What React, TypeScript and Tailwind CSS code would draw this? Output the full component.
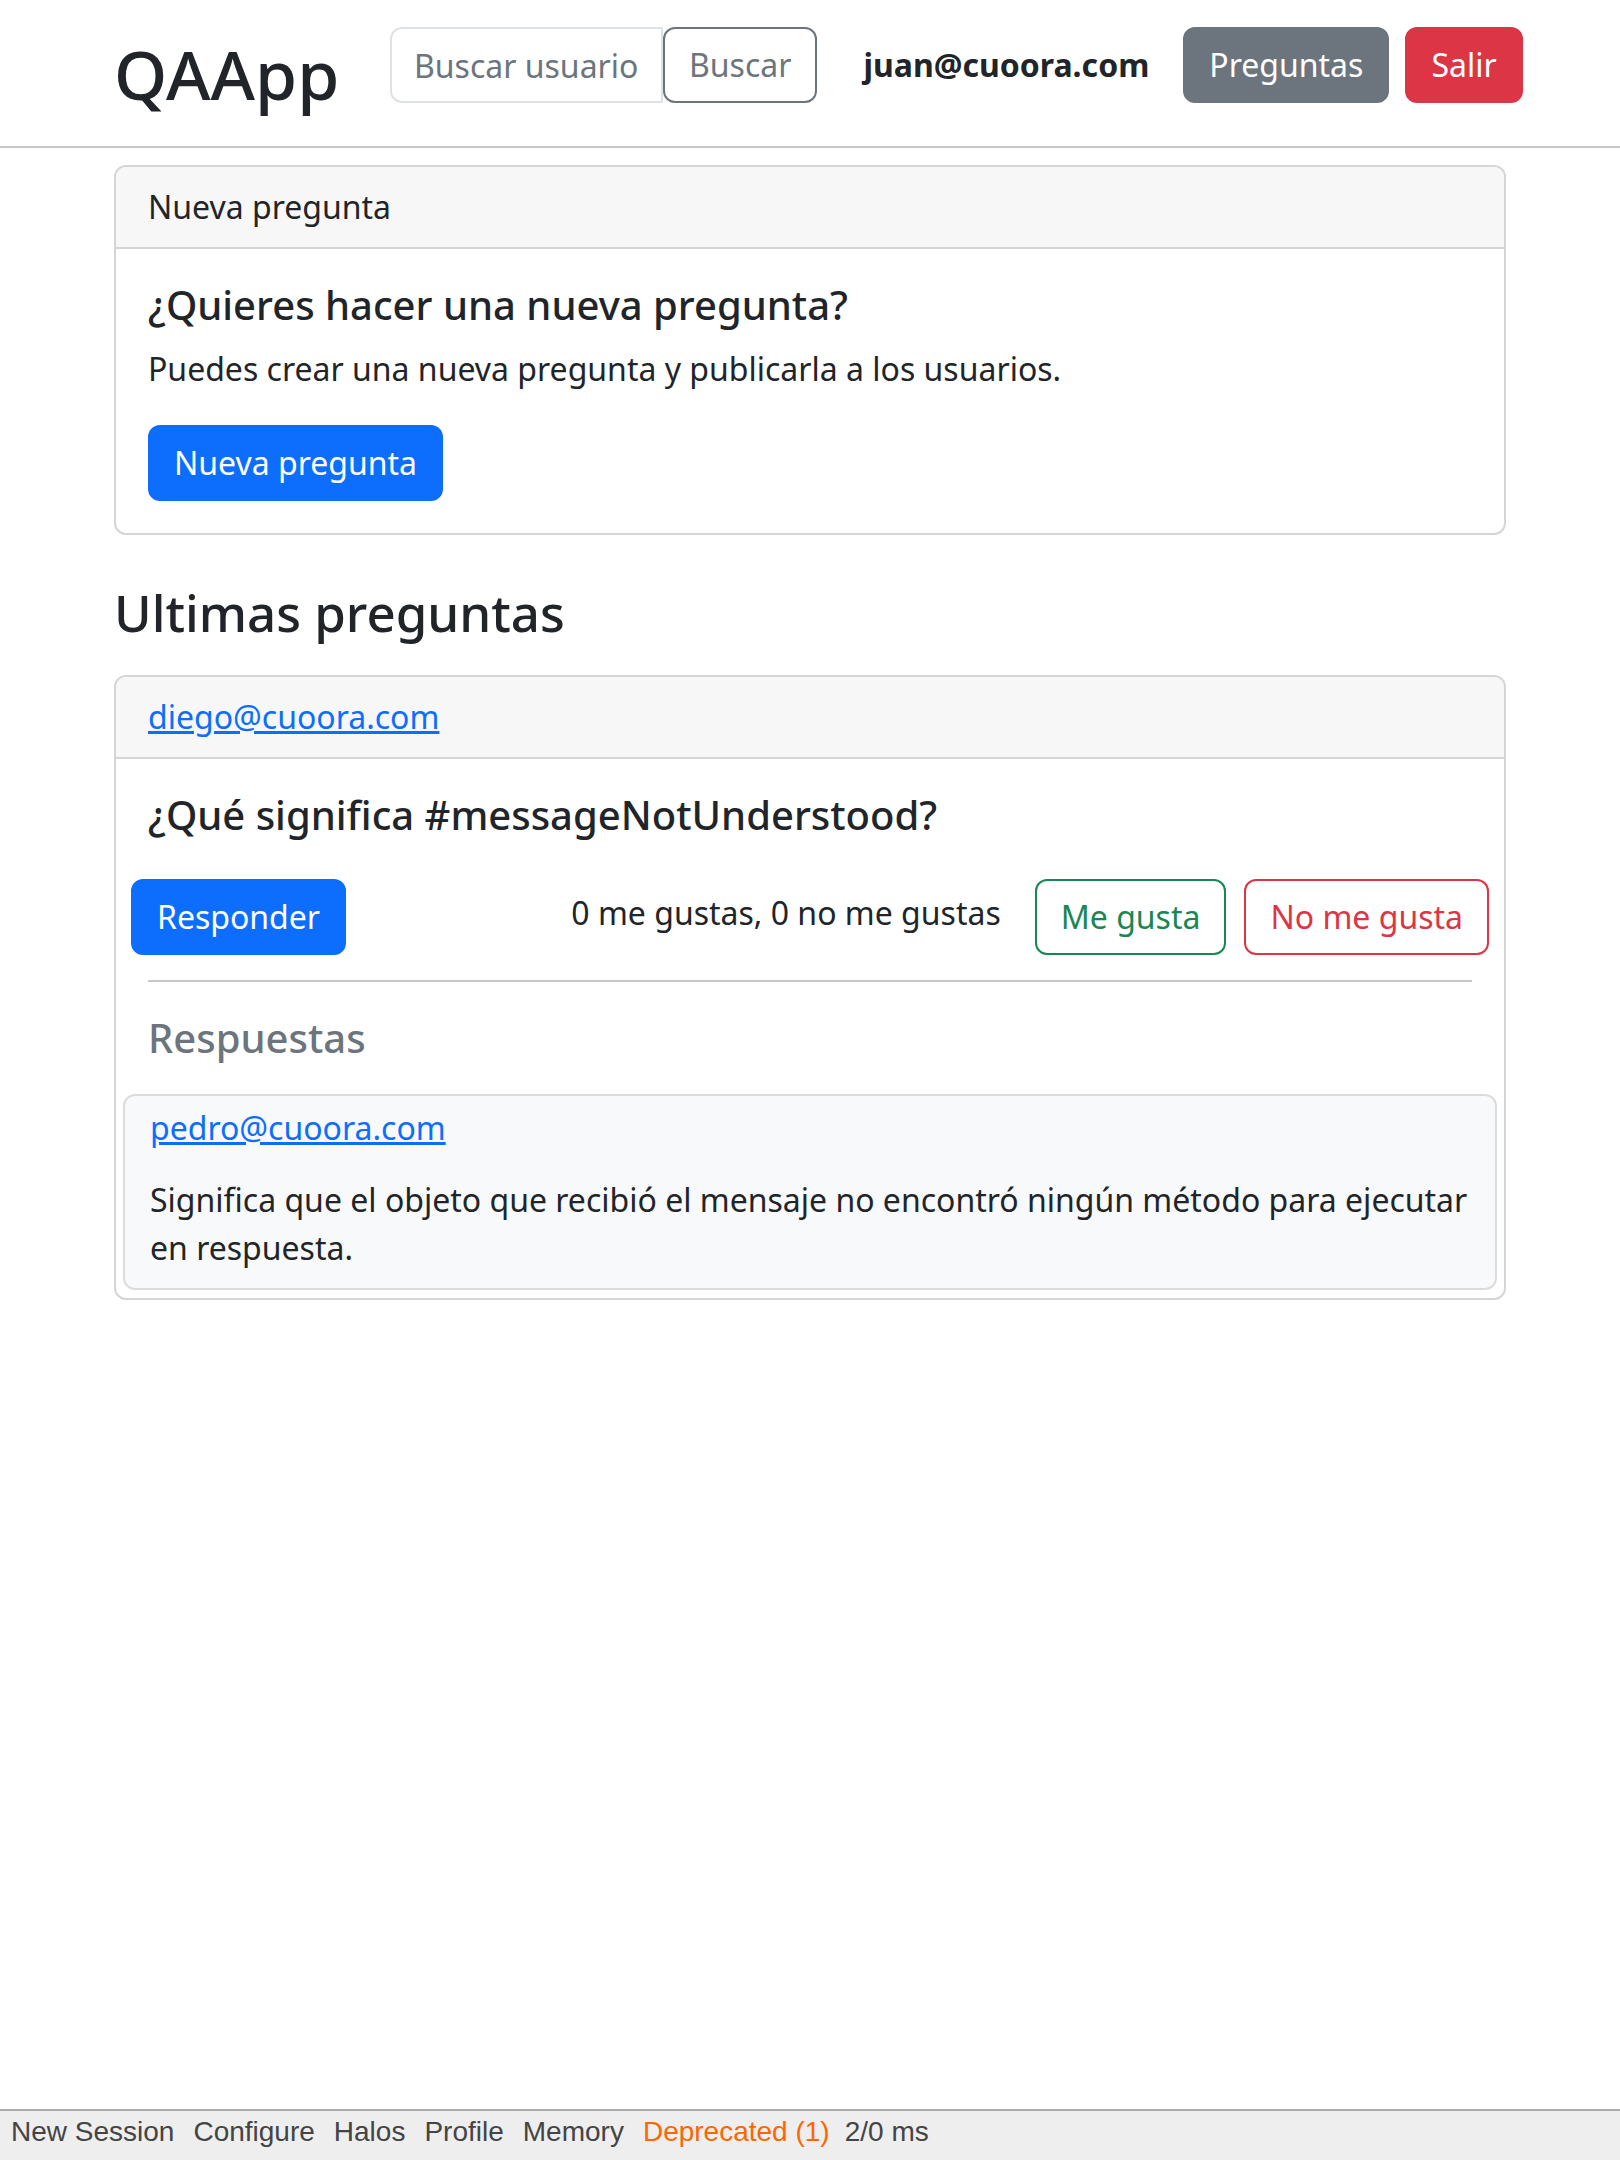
export default function App() {
  return (
    <div className="min-h-[2160px] flex flex-col bg-white text-[#212529] font-['Noto_Sans',sans-serif] text-[32px] leading-[48px]">
      {/* barra superior */}
      <header className="h-[148px] border-b-2 border-[#c8c8c8]">
        <div className="w-[1440px] mx-auto px-[24px] pt-[27px] flex items-start">
          <h1 className="w-[276px] shrink-0 mt-[6px] text-[68px] leading-[82px] font-medium">QAApp</h1>
          <div className="flex shrink-0">
            <input
              type="text"
              placeholder="Buscar usuario"
              className="w-[273px] h-[76px] pl-[22px] pr-[8px] border-2 border-[#dee2e6] rounded-l-[12px] bg-white text-[32px] outline-none placeholder:text-[#6c757d]"
            />
            <button className="h-[76px] px-[24px] py-[12px] leading-[48px] border-2 border-[#6c757d] text-[#6c757d] rounded-[12px]">
              Buscar
            </button>
          </div>
          <span className="ml-[46px] mt-[14px] shrink-0 font-bold whitespace-nowrap">juan@cuoora.com</span>
          <button className="ml-[34px] shrink-0 h-[76px] px-[24px] py-[12px] leading-[48px] border-2 border-[#6c757d] bg-[#6c757d] text-white rounded-[12px]">
            Preguntas
          </button>
          <button className="ml-[16px] shrink-0 h-[76px] px-[24px] py-[12px] leading-[48px] border-2 border-[#dc3545] bg-[#dc3545] text-white rounded-[12px]">
            Salir
          </button>
        </div>
      </header>

      <main className="w-[1440px] mx-auto px-[24px]">
        {/* nueva pregunta */}
        <div className="mt-[17px] border-2 border-[#d5d5d5] rounded-[12px] overflow-hidden">
          <div className="bg-[#f7f7f7] border-b-2 border-[#d5d5d5] px-[32px] py-[16px]">Nueva pregunta</div>
          <div className="p-[32px]">
            <h5 className="text-[40px] leading-[48px] font-medium mb-[16px]">¿Quieres hacer una nueva pregunta?</h5>
            <p className="mb-[32px]">Puedes crear una nueva pregunta y publicarla a los usuarios.</p>
            <button className="h-[76px] px-[24px] py-[12px] leading-[48px] border-2 border-[#0d6efd] bg-[#0d6efd] text-white rounded-[12px]">
              Nueva pregunta
            </button>
          </div>
        </div>

        <h3 className="mt-[47px] mb-[32px] text-[51px] leading-[61px] font-medium">Ultimas preguntas</h3>

        {/* pregunta */}
        <div className="border-2 border-[#d5d5d5] rounded-[12px] overflow-hidden">
          <div className="bg-[#f7f7f7] border-b-2 border-[#d5d5d5] px-[32px] py-[16px]">
            <a href="#" className="text-[#0d6efd] underline">diego@cuoora.com</a>
          </div>
          <div className="p-[32px]">
            <h5 className="text-[40px] leading-[48px] font-medium mb-[40px]">¿Qué significa #messageNotUnderstood?</h5>
            <div className="-mx-[17px] flex items-start">
              <button className="h-[76px] px-[24px] py-[12px] leading-[48px] border-2 border-[#0d6efd] bg-[#0d6efd] text-white rounded-[12px]">
                Responder
              </button>
              <span className="ml-auto mt-[10px] whitespace-nowrap">0 me gustas, 0 no me gustas</span>
              <button className="ml-[34px] h-[76px] px-[24px] py-[12px] leading-[48px] border-2 border-[#198754] text-[#198754] rounded-[12px]">
                Me gusta
              </button>
              <button className="ml-[18px] h-[76px] px-[24px] py-[12px] leading-[48px] border-2 border-[#dc3545] text-[#dc3545] rounded-[12px]">
                No me gusta
              </button>
            </div>
            <hr className="mt-[25px] mb-[32px] border-0 border-t-2 border-[#c8c8c8]" />
            <h5 className="text-[40px] leading-[48px] font-medium text-[#6c757d]">Respuestas</h5>
          </div>
          <div className="px-[7px] pb-[8px]">
            <div className="border-2 border-[#dcdcdc] rounded-[12px] bg-[#f8f9fa] pt-[8px] pl-[25px] pr-[18px] pb-[16px]">
              <a href="#" className="text-[#0d6efd] underline">pedro@cuoora.com</a>
              <p className="mt-[24px]">
                <span className="whitespace-nowrap">Significa que el objeto que recibió el mensaje no encontró ningún método para ejecutar</span>
                <br />
                en respuesta.
              </p>
            </div>
          </div>
        </div>
      </main>

      {/* barra de herramientas */}
      <footer className="mt-auto border-t-2 border-[#aaaaaa] bg-[#eeeeee] h-[51px] pt-[5px] px-[11px] flex gap-[19px] font-['Liberation_Sans',Arial,sans-serif] text-[28px] leading-[32px] text-[#444444]">
        <a href="#">New Session</a>
        <a href="#">Configure</a>
        <a href="#">Halos</a>
        <a href="#">Profile</a>
        <a href="#">Memory</a>
        <a href="#" className="text-[#ff6600]">Deprecated (1)</a>
        <span className="-ml-[4px]">2/0 ms</span>
      </footer>
    </div>
  );
}
